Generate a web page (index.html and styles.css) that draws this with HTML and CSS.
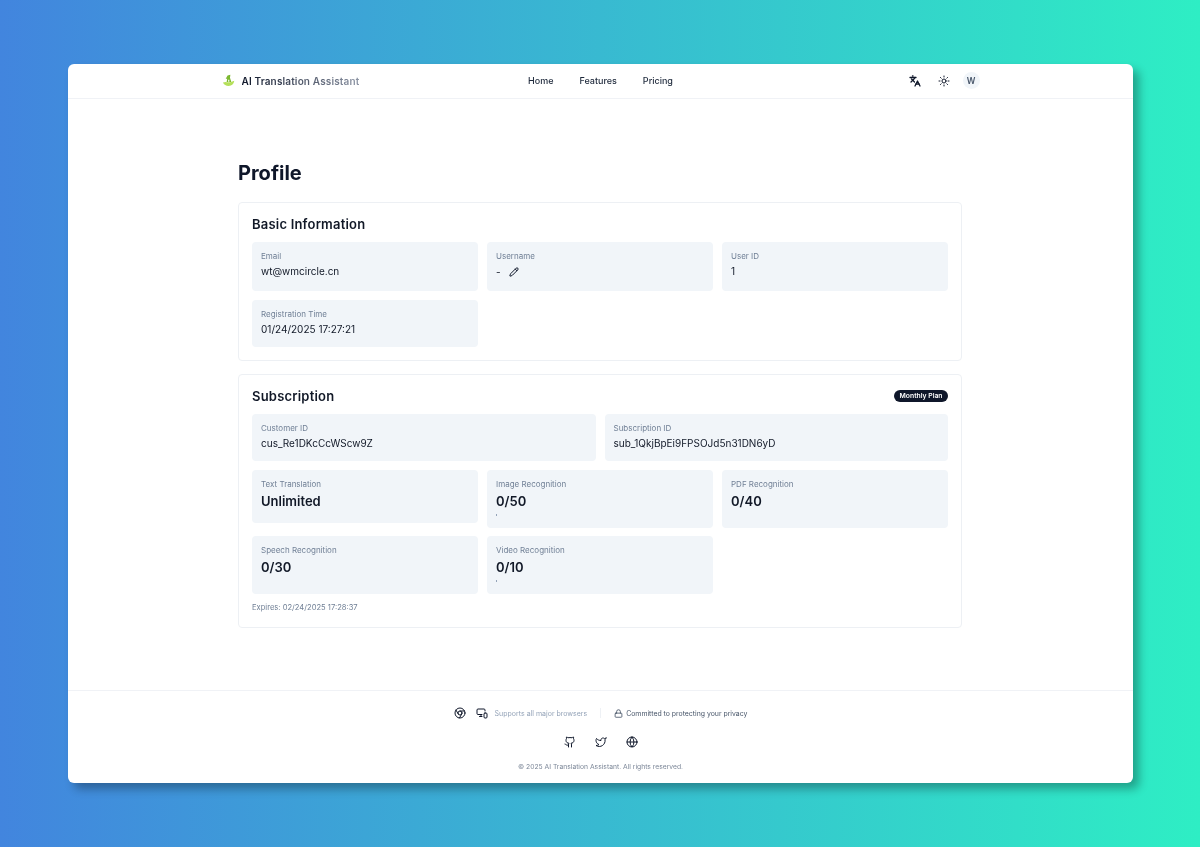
FILE: index.html
```html
<!DOCTYPE html>
<html lang="en">
<head>
  <meta charset="UTF-8">
  <meta name="viewport" content="width=device-width, initial-scale=1.0">
  <title>Profile - AI Translation Assistant</title>
  <link rel="stylesheet" href="styles.css">
</head>
<body>
<div class="app-window">
  <header class="navbar">
    <div class="navbar-inner">
      <a class="brand">
        <svg class="brand-logo" viewBox="0 0 14 14">
          <path d="M6 1.5 9 0.8 8.6 4 10 8.5 5 8.5 5.6 5 4 5z" fill="#7cb82f"/>
          <path d="M6.6 6.2h1.3v2.2H6.6z" fill="#fff"/>
          <path d="M1 9.2 4 8.6c2 .6 4.5.5 6.4-.2l2.8-1c-.4 3.2-2.6 5.6-6 5.6-3 0-5.2-1.4-6.2-3.8z" fill="#b5e05a"/>
        </svg>
        <span class="brand-name">AI Translation Assistant</span>
      </a>
      <nav class="nav-links">
        <a>Home</a>
        <a>Features</a>
        <a>Pricing</a>
      </nav>
      <div class="nav-actions">
        <svg class="icon icon-nav icon-translate" viewBox="0 0 24 24"><path d="m5 8 6 6"/><path d="m4 14 6-6 2-3"/><path d="M2 5h12"/><path d="M7 2h1"/><path d="m22 22-5-10-5 10"/><path d="M14 18h6"/></svg>
        <svg class="icon icon-nav" viewBox="0 0 24 24"><circle cx="12" cy="12" r="4"/><path d="M12 2v2"/><path d="M12 20v2"/><path d="m4.93 4.93 1.41 1.41"/><path d="m17.66 17.66 1.41 1.41"/><path d="M2 12h2"/><path d="M20 12h2"/><path d="m6.34 17.66-1.41 1.41"/><path d="m19.07 4.93-1.41 1.41"/></svg>
        <span class="avatar">W</span>
      </div>
    </div>
  </header>

  <main class="content">
    <h1 class="page-title">Profile</h1>

    <section class="card">
      <h2 class="card-title">Basic Information</h2>
      <div class="grid-3">
        <div class="field">
          <div class="field-label">Email</div>
          <div class="field-value">wt@wmcircle.cn</div>
        </div>
        <div class="field">
          <div class="field-label">Username</div>
          <div class="field-value field-value-edit">
            <span>-</span>
            <svg class="icon icon-edit" viewBox="0 0 24 24"><path d="M21.174 6.812a1 1 0 0 0-3.986-3.987L3.842 16.174a2 2 0 0 0-.5.83l-1.321 4.352a.5.5 0 0 0 .623.622l4.353-1.32a2 2 0 0 0 .83-.497z"/><path d="m15 5 4 4"/></svg>
          </div>
        </div>
        <div class="field">
          <div class="field-label">User ID</div>
          <div class="field-value">1</div>
        </div>
        <div class="field">
          <div class="field-label">Registration Time</div>
          <div class="field-value">01/24/2025 17:27:21</div>
        </div>
      </div>
    </section>

    <section class="card">
      <div class="card-header">
        <h2 class="card-title">Subscription</h2>
        <span class="plan-badge">Monthly Plan</span>
      </div>
      <div class="grid-2">
        <div class="field">
          <div class="field-label">Customer ID</div>
          <div class="field-value">cus_Re1DKcCcWScw9Z</div>
        </div>
        <div class="field">
          <div class="field-label">Subscription ID</div>
          <div class="field-value">sub_1QkjBpEi9FPSOJd5n31DN6yD</div>
        </div>
      </div>
      <div class="grid-3 quota-grid">
        <div class="field quota quota-unlimited">
          <div class="field-label">Text Translation</div>
          <div class="quota-value">Unlimited</div>
        </div>
        <div class="field quota">
          <div class="field-label">Image Recognition</div>
          <div class="quota-value">0/50</div>
          <div class="quota-bar"></div>
        </div>
        <div class="field quota">
          <div class="field-label">PDF Recognition</div>
          <div class="quota-value">0/40</div>
        </div>
        <div class="field quota">
          <div class="field-label">Speech Recognition</div>
          <div class="quota-value">0/30</div>
        </div>
        <div class="field quota">
          <div class="field-label">Video Recognition</div>
          <div class="quota-value">0/10</div>
          <div class="quota-bar"></div>
        </div>
      </div>
      <p class="expires">Expires: 02/24/2025 17:28:37</p>
    </section>
  </main>

  <footer class="footer">
    <div class="footer-info">
      <svg class="icon icon-footer" viewBox="0 0 24 24"><circle cx="12" cy="12" r="10"/><circle cx="12" cy="12" r="4"/><path d="M21.17 8H12"/><path d="M3.95 6.06 8.54 14"/><path d="M10.88 21.94 15.46 14"/></svg>
      <svg class="icon icon-footer icon-devices" viewBox="0 0 24 24"><path d="M18 8V6a2 2 0 0 0-2-2H4a2 2 0 0 0-2 2v7a2 2 0 0 0 2 2h8"/><path d="M10 19v-4"/><path d="M7 19h5"/><rect x="16" y="12" width="6" height="10" rx="2"/></svg>
      <span class="footer-muted">Supports all major browsers</span>
      <span class="footer-divider"></span>
      <svg class="icon icon-lock" viewBox="0 0 24 24"><rect x="3" y="11" width="18" height="11" rx="2"/><path d="M7 11V7a5 5 0 0 1 10 0v4"/></svg>
      <span class="footer-text">Committed to protecting your privacy</span>
    </div>
    <div class="footer-social">
      <svg class="icon icon-social" viewBox="0 0 24 24"><path d="M15 22v-4a4.8 4.8 0 0 0-1-3.5c3 0 6-2 6-5.5.08-1.25-.27-2.48-1-3.5.28-1.15.28-2.35 0-3.5 0 0-1 0-3 1.5-2.64-.5-5.36-.5-8 0C6 2 5 2 5 2c-.3 1.15-.3 2.35 0 3.5A5.403 5.403 0 0 0 4 9c0 3.5 3 5.5 6 5.5-.39.49-.68 1.05-.85 1.65-.17.6-.22 1.23-.15 1.85v4"/><path d="M9 18c-4.51 2-5-2-7-2"/></svg>
      <svg class="icon icon-social" viewBox="0 0 24 24"><path d="M22 4s-.7 2.1-2 3.4c1.6 10-9.4 17.3-18 11.6 2.2.1 4.4-.6 6-2C3 15.5.5 9.6 3 5c2.2 2.6 5.6 4.1 9 4-.9-4.2 4-6.6 7-3.8 1.1 0 3-1.2 3-1.2z"/></svg>
      <svg class="icon icon-social" viewBox="0 0 24 24"><circle cx="12" cy="12" r="10"/><path d="M12 2a14.5 14.5 0 0 0 0 20 14.5 14.5 0 0 0 0-20"/><path d="M2 12h20"/></svg>
    </div>
    <p class="copyright">© 2025 AI Translation Assistant. All rights reserved.</p>
  </footer>
</div>
</body>
</html>
```

FILE: styles.css
```css
* {
  box-sizing: border-box;
}
html, body {
  height: 100%;
}
body {
  margin: 0;
  padding: 64px 67px 64px 68px;
  overflow: hidden;
  font-family: Inter, "Liberation Sans", sans-serif;
  color: #0f172a;
  background: linear-gradient(to right, #4285de, #2eeec4);
}
.app-window {
  height: 719px;
  background-color: #ffffff;
  border-radius: 6px;
  box-shadow: 6px 6px 10px rgba(0, 0, 0, 0.3);
  display: flex;
  flex-direction: column;
  overflow: hidden;
  will-change: transform;
}

/* barra superior */
.navbar {
  height: 35px;
  padding-bottom: 1px;
  border-bottom: 1px solid #f0f2f6;
  flex-shrink: 0;
}
.navbar-inner {
  width: 758px;
  height: 100%;
  margin: 0 auto;
  display: grid;
  grid-template-columns: 1fr auto 1fr;
  align-items: center;
}
.brand {
  display: flex;
  align-items: center;
  gap: 7px;
}
.brand-logo {
  width: 13px;
  height: 13px;
}
.brand-name {
  font-size: 10px;
  font-weight: 600;
  letter-spacing: 0.15px;
  background: linear-gradient(to right, #0f172a, #8b93a3);
  -webkit-background-clip: text;
  background-clip: text;
  color: transparent;
}
.nav-links {
  display: flex;
  gap: 26px;
  font-size: 9px;
  font-weight: 500;
  color: #1e293b;
}
.nav-actions {
  display: flex;
  align-items: center;
  justify-content: flex-end;
  gap: 13px;
}
.avatar {
  width: 17px;
  height: 17px;
  border-radius: 50%;
  background-color: #f1f5f9;
  color: #475569;
  font-size: 8.5px;
  font-weight: 600;
  display: flex;
  align-items: center;
  justify-content: center;
}

/* iconos */
.icon {
  fill: none;
  stroke: #0f172a;
  stroke-width: 2;
  stroke-linecap: round;
  stroke-linejoin: round;
  flex-shrink: 0;
}
.icon-nav {
  width: 12px;
  height: 12px;
}
.icon-translate {
  margin-right: 4px;
  stroke-width: 2.6;
}
.icon-edit {
  width: 10px;
  height: 10px;
  stroke-width: 2.4;
}
.icon-footer {
  width: 12px;
  height: 12px;
}
.icon-devices {
  margin-left: 5px;
}
.icon-lock {
  width: 9px;
  height: 9px;
  stroke: #334155;
}
.icon-social {
  width: 12px;
  height: 12px;
}

/* contenido */
.content {
  flex: 1;
  width: 724px;
  margin-left: 170px;
  padding-top: 60px;
  display: flex;
  flex-direction: column;
  gap: 13px;
}
.page-title {
  margin: 0 0 2px;
  font-size: 20px;
  line-height: 28px;
  font-weight: 700;
}
.card {
  border: 1px solid #edf0f4;
  border-radius: 4px;
  padding: 13px;
}
.card-header {
  display: flex;
  align-items: flex-start;
  justify-content: space-between;
}
.card-title {
  margin: 0 0 10px;
  font-size: 13px;
  line-height: 16px;
  font-weight: 600;
  letter-spacing: 0.2px;
  color: #111827;
}
.plan-badge {
  margin-top: 2px;
  padding: 0 5.5px;
  height: 12px;
  line-height: 12px;
  border-radius: 6px;
  background-color: #0f172a;
  color: #ffffff;
  font-size: 6.8px;
  font-weight: 600;
}
.grid-3 {
  display: grid;
  grid-template-columns: repeat(3, 1fr);
  gap: 9px;
}
.grid-2 {
  display: grid;
  grid-template-columns: repeat(2, 1fr);
  gap: 9px;
}
.quota-grid {
  margin-top: 9px;
  row-gap: 8px;
}
.field {
  background-color: #f1f5f9;
  border-radius: 4px;
  padding: 9px 9px 10px;
}
.field-label {
  font-size: 8px;
  line-height: 11px;
  color: #718096;
}
.field-value {
  margin-top: 1px;
  font-size: 10px;
  line-height: 16px;
  color: #111827;
}
.field-value-edit {
  display: flex;
  align-items: center;
  gap: 8px;
  height: 18px;
}
.quota {
  padding-bottom: 12px;
}
.quota-unlimited {
  align-self: start;
}
.quota-value {
  margin-top: 1px;
  font-size: 13px;
  line-height: 20px;
  font-weight: 600;
  color: #111827;
}
.quota-bar {
  width: 1px;
  height: 2px;
  margin-top: 3px;
  background-color: #94a3b8;
}
.expires {
  margin: 8px 0 0;
  font-size: 7.6px;
  line-height: 12px;
  color: #718096;
}

/* pie */
.footer {
  height: 93px;
  border-top: 1px solid #f0f2f6;
  flex-shrink: 0;
  display: flex;
  flex-direction: column;
  align-items: center;
  padding-top: 16px;
}
.footer-info {
  display: flex;
  align-items: center;
  height: 12px;
  font-size: 7px;
  gap: 5px;
}
.footer-muted {
  margin-left: 2px;
  color: #94a3b8;
}
.footer-text {
  margin-left: -2px;
  font-size: 6.9px;
  color: #475569;
}
.footer-divider {
  width: 1px;
  height: 10px;
  margin: 0 8px;
  background-color: #eef1f5;
}
.footer-social {
  display: flex;
  gap: 19px;
  margin-top: 17px;
}
.copyright {
  margin: 14px 0 0;
  font-size: 6.75px;
  line-height: 10px;
  color: #7c8798;
}
```
